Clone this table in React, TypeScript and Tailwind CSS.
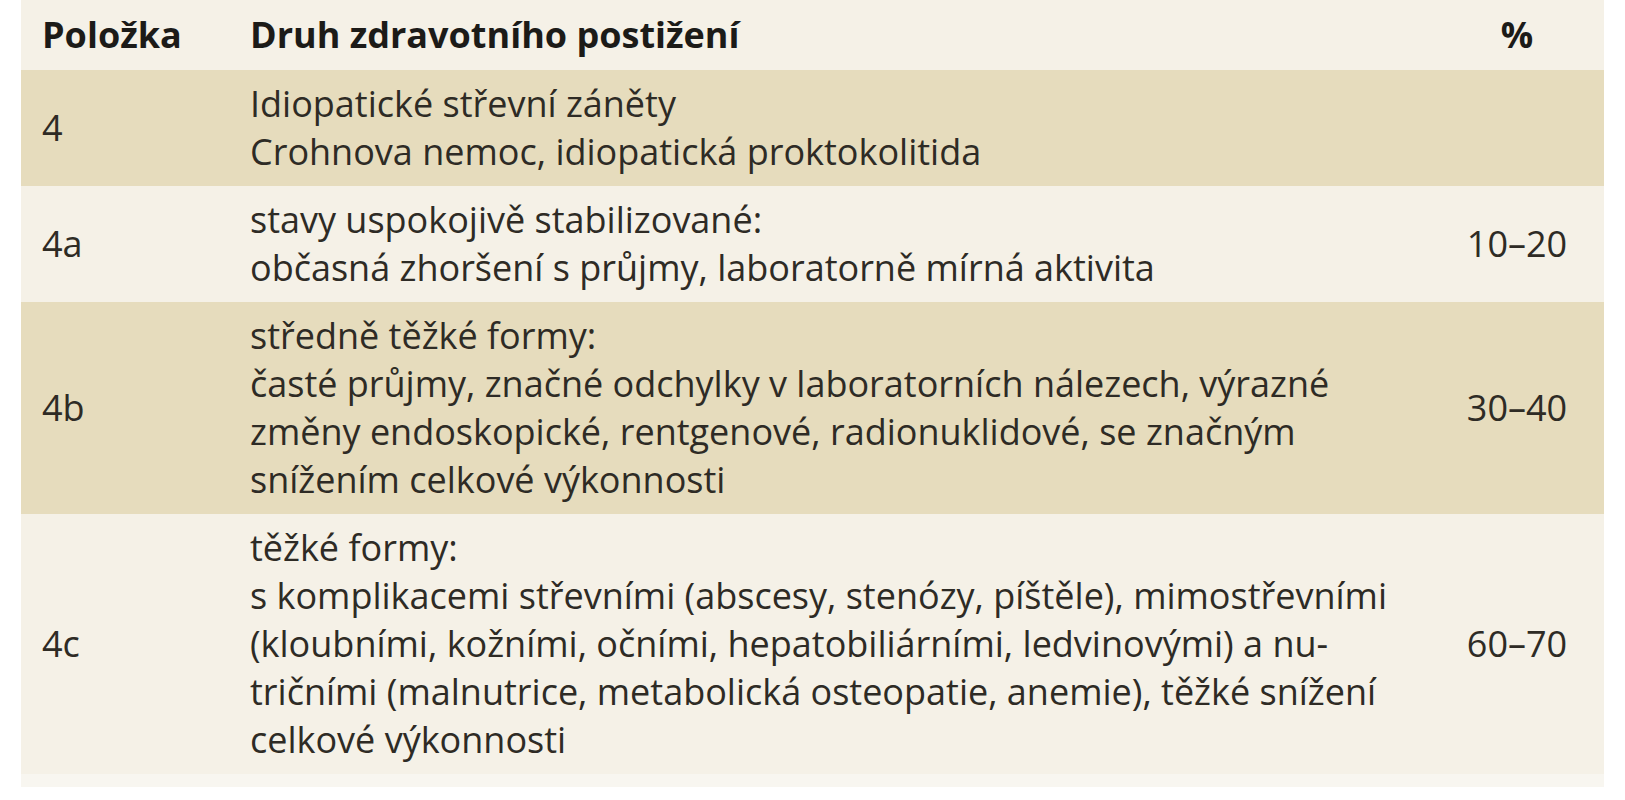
import React from "react";

type Row = { id: string; lines: string[]; pct: string; dark: boolean };

const rows: Row[] = [
  {
    id: "4",
    lines: ["Idiopatické střevní záněty", "Crohnova nemoc, idiopatická proktokolitida"],
    pct: "",
    dark: true,
  },
  {
    id: "4a",
    lines: ["stavy uspokojivě stabilizované:", "občasná zhoršení s průjmy, laboratorně mírná aktivita"],
    pct: "10–20",
    dark: false,
  },
  {
    id: "4b",
    lines: [
      "středně těžké formy:",
      "časté průjmy, značné odchylky v laboratorních nálezech, výrazné",
      "změny endoskopické, rentgenové, radionuklidové, se značným",
      "snížením celkové výkonnosti",
    ],
    pct: "30–40",
    dark: true,
  },
  {
    id: "4c",
    lines: [
      "těžké formy:",
      "s komplikacemi střevními (abscesy, stenózy, píštěle), mimostřevními",
      "(kloubními, kožními, očními, hepatobiliárními, ledvinovými) a nu-",
      "tričními (malnutrice, metabolická osteopatie, anemie), těžké snížení",
      "celkové výkonnosti",
    ],
    pct: "60–70",
    dark: false,
  },
];

export default function App() {
  return (
    <div className="min-h-[800px] w-full bg-white pl-[21px]" style={{ fontFamily: '"Open Sans", "Noto Sans", sans-serif' }}>
      <div className="w-[1583px] text-[36px] text-[#2e2b25]">
        <div className="grid h-[70px] grid-cols-[229px_1fr_174px] items-center bg-[#f5f1e7] font-bold text-[#1c1b18]">
          <div className="pl-[21px]">Položka</div>
          <div>Druh zdravotního postižení</div>
          <div className="text-center">%</div>
        </div>
        {rows.map((r) => (
          <div
            key={r.id}
            className={
              "grid grid-cols-[229px_1fr_174px] items-center py-[10px] leading-[48px] " +
              (r.dark ? "bg-[#e6dcbd]" : "bg-[#f5f1e7]")
            }
          >
            <div className="pl-[21px]">{r.id}</div>
            <div className="flex flex-col">
              {r.lines.map((l, i) => (
                <span key={i} className="whitespace-nowrap">
                  {l}
                </span>
              ))}
            </div>
            <div className="text-center">{r.pct}</div>
          </div>
        ))}
        <div className="h-[13px] bg-[#f8f6f0]" />
      </div>
    </div>
  );
}
